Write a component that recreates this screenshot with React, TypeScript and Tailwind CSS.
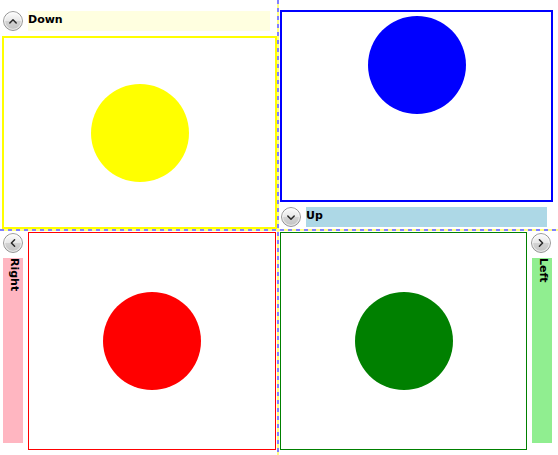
import { useId } from 'react'

type Dir = 'up' | 'down' | 'left' | 'right'

const CHEVRON: Record<Dir, string> = {
  up: 'M6.8 12 L10 8.8 L13.2 12',
  down: 'M6.8 9 L10 12.2 L13.2 9',
  left: 'M11.6 6.8 L8.4 10 L11.6 13.2',
  right: 'M8.4 6.8 L11.6 10 L8.4 13.2',
}

function ToggleButton({ dir }: { dir: Dir }) {
  const id = useId()
  return (
    <svg width="20" height="20" viewBox="0 0 20 20" className="block shrink-0">
      <defs>
        <linearGradient id={id} x1="0" y1="0" x2="0" y2="1">
          <stop offset="0" stopColor="#fdfdfd" />
          <stop offset="0.48" stopColor="#e8e8e8" />
          <stop offset="0.52" stopColor="#d2d2d2" />
          <stop offset="1" stopColor="#c4c4c4" />
        </linearGradient>
      </defs>
      <circle cx="10" cy="10" r="9.4" fill={`url(#${id})`} stroke="#8f8f8f" strokeWidth="1" />
      <circle cx="10" cy="10" r="8.4" fill="none" stroke="#ffffff" strokeOpacity="0.7" strokeWidth="1" />
      <path d={CHEVRON[dir]} fill="none" stroke="#2a2a2a" strokeWidth="1.5" strokeLinecap="round" strokeLinejoin="round" />
    </svg>
  )
}

const font = "font-['DejaVu_Sans','Verdana',sans-serif] text-[11px] font-bold leading-[13px] text-black"

export default function App() {
  return (
    <div className="w-[558px] h-[455px] bg-white overflow-hidden grid grid-cols-[277px_2px_1fr] grid-rows-[229px_2px_1fr]">
      {/* Down */}
      <div className="col-start-1 row-start-1 flex flex-col pl-[2px] pt-[11px]">
        <div className="flex h-[20px] items-center pl-[1px] pr-[7px]">
          <ToggleButton dir="up" />
          <div className={`ml-[5px] flex-1 h-[20px] bg-[#ffffe0] pt-[2px] ${font}`}>Down</div>
        </div>
        <div className="mt-[5px] flex-1 border-2 border-[#ffff00] flex items-center justify-center">
          <div className="w-[98px] h-[98px] rounded-full bg-[#ffff00]" />
        </div>
      </div>

      {/* Up */}
      <div className="col-start-3 row-start-1 flex flex-col pt-[10px] pb-[2px]">
        <div className="ml-[1px] mr-[5px] flex-1 border-2 border-[#0000ff] flex justify-center pt-[4px]">
          <div className="w-[98px] h-[98px] rounded-full bg-[#0000ff]" />
        </div>
        <div className="mt-[5px] flex h-[20px] items-center pl-[2px] pr-[11px]">
          <ToggleButton dir="down" />
          <div className={`ml-[5px] flex-1 h-[20px] bg-[#add8e6] pt-[2px] ${font}`}>Up</div>
        </div>
      </div>

      {/* Right */}
      <div className="col-start-1 row-start-3 flex pl-[3px]">
        <div className="w-[20px] flex flex-col pt-[2px] pb-[12px]">
          <ToggleButton dir="left" />
          <div className={`mt-[5px] flex-1 bg-[#ffb6c1] pr-[2px] [writing-mode:vertical-rl] ${font}`}>Right</div>
        </div>
        <div className="ml-[5px] mr-[1px] mt-[1px] mb-[5px] flex-1 border border-[#ff0000] flex items-center justify-center">
          <div className="w-[98px] h-[98px] rounded-full bg-[#ff0000]" />
        </div>
      </div>

      {/* Left */}
      <div className="col-start-3 row-start-3 flex pl-[1px] pr-[6px]">
        <div className="mt-[1px] mb-[5px] flex-1 border border-[#008000] flex items-center justify-center">
          <div className="w-[98px] h-[98px] rounded-full bg-[#008000]" />
        </div>
        <div className="ml-[4px] w-[21px] flex flex-col pt-[2px] pb-[12px]">
          <ToggleButton dir="right" />
          <div className={`mt-[5px] ml-[1px] flex-1 bg-[#90ee90] pr-[2px] [writing-mode:vertical-rl] ${font}`}>Left</div>
        </div>
      </div>

      {/* grid lines */}
      <div className="col-start-2 row-start-1 row-span-3 bg-[repeating-linear-gradient(to_bottom,#8080ff_0_4px,#ffff80_4px_8px)]" />
      <div className="col-start-1 col-span-3 row-start-2 bg-[repeating-linear-gradient(to_right,#8080ff_0_4px,#ffff80_4px_8px)]" />
    </div>
  )
}
